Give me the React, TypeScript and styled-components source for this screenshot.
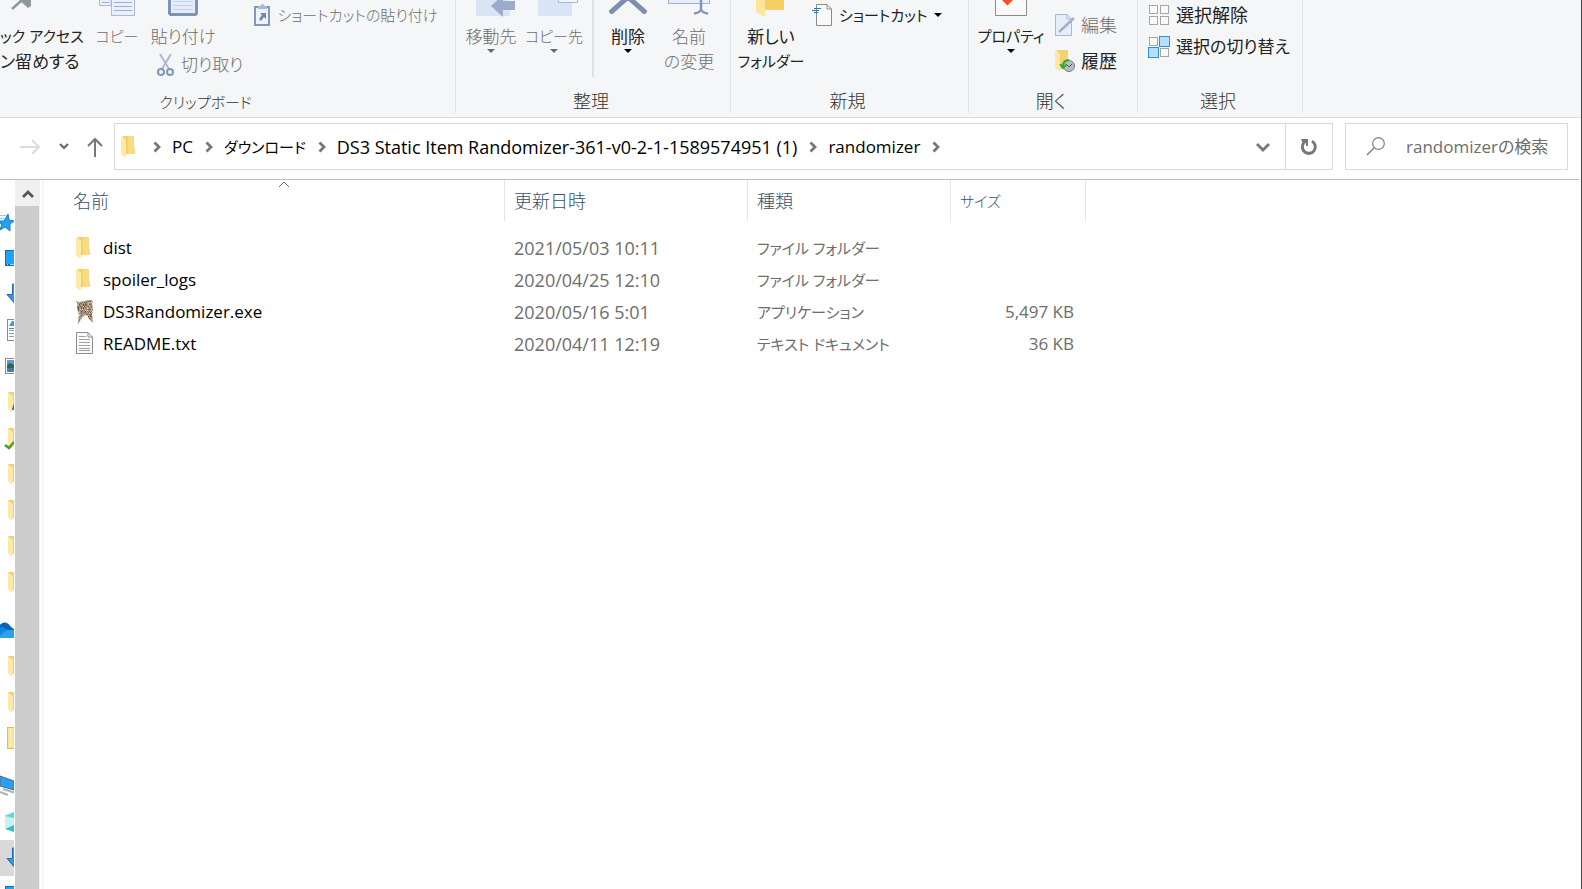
import React from "react";
import styled, { createGlobalStyle } from "styled-components";

const GlobalStyle = createGlobalStyle`
  *, *::before, *::after { box-sizing: border-box; }
  html, body { margin: 0; padding: 0; }
  body {
    background: #fff;
    color: #1a1a1a;
    font-family: "Open Sans", "Noto Sans CJK JP", sans-serif;
    font-size: 17px;
    font-feature-settings: "palt";
  }
  button, input { font: inherit; font-feature-settings: inherit; color: inherit; }
  button { background: none; border: 0; padding: 0; margin: 0; white-space: nowrap; }
`;

/* Katakana runs are set smaller than kanji, and kanji slightly larger than Latin. */
const Kana = styled.span`
  font-size: 15px;
`;

const Kanji = styled.span`
  font-size: 18px;
`;

const DateText = styled.time`
  font-size: 18px;
`;

const Window = styled.div`
  height: 100vh;
  display: flex;
  flex-direction: column;
  overflow: hidden;
  border-right: 1px solid #33484e;
`;

/* ---------- Ribbon ---------- */

const Ribbon = styled.header`
  display: flex;
  flex: none;
  height: 118px;
  padding-bottom: 4px;
  background: #f5f6f7;
  border-bottom: 1px solid #dadbdc;
`;

const Group = styled.section<{ $width: number }>`
  flex: none;
  width: ${(p) => p.$width}px;
  display: flex;
  flex-direction: column;
  border-right: 1px solid #e2e3e4;
`;

const GroupBody = styled.div<{ $padLeft: number }>`
  flex: 1;
  display: flex;
  align-items: flex-start;
  padding-left: ${(p) => p.$padLeft}px;
`;

const GroupTitle = styled.h2<{ $padRight?: number }>`
  margin: 0;
  padding-right: ${(p) => p.$padRight ?? 4}px;
  height: 24px;
  line-height: 24px;
  font-size: 18px;
  font-weight: 300;
  text-align: center;
  color: #333;
`;

const BigButton = styled.button<{ $width: number; $dim?: boolean; $edge?: boolean }>`
  width: ${(p) => p.$width}px;
  display: flex;
  flex-direction: column;
  align-items: ${(p) => (p.$edge ? "flex-start" : "center")};
  line-height: 25px;
  font-weight: ${(p) => (p.$dim ? 300 : 400)};
  color: ${(p) => (p.$dim ? "#6d6d6d" : "#222")};
  svg { display: block; flex: none; }
`;

const IconSlot = styled.span`
  display: flex;
  height: 24px;
`;

const Caret = styled.span<{ $dim?: boolean }>`
  border: 4px solid transparent;
  border-bottom: 0;
  border-top-color: ${(p) => (p.$dim ? "#6a6a6a" : "#000")};
`;

const SmallButton = styled.button<{ $dim?: boolean }>`
  height: 30px;
  display: flex;
  align-items: center;
  gap: 6px;
  line-height: 24px;
  font-weight: ${(p) => (p.$dim ? 300 : 400)};
  color: ${(p) => (p.$dim ? "#6d6d6d" : "#222")};
  svg { display: block; flex: none; }
`;

const Stack = styled.div<{ $gap?: number; $top?: number; $left?: number }>`
  display: flex;
  flex-direction: column;
  align-items: flex-start;
  gap: ${(p) => p.$gap ?? 0}px;
  padding-top: ${(p) => p.$top ?? 0}px;
  margin-left: ${(p) => p.$left ?? 0}px;
`;

const Divider = styled.span`
  width: 2px;
  height: 77px;
  margin: 0 6px;
  background: #dfe0e2;
`;

/* ---------- Address bar ---------- */

const AddressRow = styled.div`
  flex: none;
  display: flex;
  align-items: center;
  height: 62px;
  padding: 0 11px 4px 20px;
  margin-right: 2px;
  border-bottom: 1px solid #bcbcbc;
`;

const NavButtons = styled.div`
  display: flex;
  align-items: center;
  gap: 18px;
  width: 94px;
  svg { display: block; }
`;

const AddressBox = styled.nav`
  flex: 1;
  min-width: 0;
  height: 47px;
  display: flex;
  align-items: center;
  padding-left: 6px;
  border: 1px solid #d9d9d9;
  svg { display: block; flex: none; }
`;

const Crumbs = styled.ol`
  flex: 1;
  display: flex;
  align-items: center;
  margin: 0;
  padding: 0 0 0 18px;
  list-style: none;
  gap: 11px;
  color: #000;
  li { display: flex; align-items: center; gap: 12px; }
`;

const CrumbButton = styled.button<{ $size: number }>`
  font-size: ${(p) => p.$size}px;
  line-height: 24px;
`;

const HistoryButton = styled.button`
  width: 29px;
  height: 45px;
  display: flex;
  align-items: center;
`;

const RefreshButton = styled.button`
  width: 47px;
  height: 45px;
  display: flex;
  align-items: center;
  justify-content: center;
  border-left: 1px solid #d9d9d9;
`;

const SearchBox = styled.label`
  width: 223px;
  height: 47px;
  margin-left: 12px;
  padding-left: 20px;
  display: flex;
  align-items: center;
  gap: 20px;
  border: 1px solid #d9d9d9;
  svg { flex: none; }
`;

const SearchInput = styled.input`
  flex: 1;
  min-width: 0;
  padding: 0;
  border: 0;
  outline: 0;
  background: none;
  &::placeholder { color: #6d6d6d; opacity: 1; }
`;

/* ---------- Main area ---------- */

const Main = styled.div`
  flex: 1;
  min-height: 0;
  display: flex;
`;

const Tree = styled.aside`
  width: 14px;
  padding-top: 24px;
  overflow: hidden;
`;

const TreeItem = styled.div<{ $selected?: boolean; $gapBefore?: boolean }>`
  height: 36px;
  margin-top: ${(p) => (p.$gapBefore ? 12 : 0)}px;
  background: ${(p) => (p.$selected ? "#d9d9d9" : "transparent")};
  svg { display: block; }
`;

const ScrollBar = styled.div`
  flex: none;
  width: 25px;
  margin-left: 1px;
  display: flex;
  flex-direction: column;
  background: #f0f0f0;
`;

const ScrollUp = styled.button`
  height: 26px;
  display: flex;
  align-items: center;
  justify-content: center;
`;

const ScrollThumb = styled.div`
  flex: 1;
  margin-right: 1px;
  background: #cdcdcd;
`;

const FilePane = styled.main`
  flex: 1;
  min-width: 0;
  margin-left: 2px;
  padding-left: 18px;
  border-left: 2px solid #f6f6f6;
`;

const FileTable = styled.table`
  table-layout: fixed;
  width: 1024px;
  border-collapse: collapse;
`;

const HeadCell = styled.th<{ $width: number }>`
  width: ${(p) => p.$width}px;
  padding: 0 0 11px;
  position: relative;
  text-align: left;
  font-weight: 300;
`;

const HeadLabel = styled.div<{ $pad: number }>`
  height: 41px;
  line-height: 42px;
  padding-left: ${(p) => p.$pad}px;
  border-right: 1px solid #e5e5e5;
  color: #3a4f6c;
`;

const SortMark = styled.svg`
  position: absolute;
  top: 1px;
  left: 50%;
  margin-left: -6px;
`;

const Cell = styled.td<{ $right?: boolean }>`
  height: 32px;
  padding: 0 ${(p) => (p.$right ? 12 : 0)}px 0 9px;
  line-height: 24px;
  white-space: nowrap;
  text-align: ${(p) => (p.$right ? "right" : "left")};
  color: #6d6d6d;
`;

const FileName = styled.span`
  display: flex;
  align-items: center;
  gap: 10px;
  padding-left: 5px;
  color: #000;
`;

/* ---------- Drawings ---------- */

const Folder = () => (
  <svg width="14" height="22" viewBox="0 0 14 22" aria-hidden="true">
    <path d="M2 0H13V12L14 13V18H4Z" fill="#f3d06f" />
    <path d="M7 0H13V12L14 13V18H7Z" fill="#f9dc80" />
    <path d="M0 0L5 4V21L3 21L0 18Z" fill="#ffe9a6" />
  </svg>
);

const TextFile = () => (
  <svg width="17" height="24" viewBox="0 0 17 24" aria-hidden="true">
    <path d="M.5.5H12L16.500 5V21.500H.5Z" fill="#fafafa" stroke="#8b8b8b" />
    <path d="M12 .5V5H16.500" fill="none" stroke="#8b8b8b" />
    <path d="M3 4.500H10M3 7.500H14M3 10.500H14M3 13.500H14M3 16.500H14M3 18.500H14" stroke="#a0a0a0" />
  </svg>
);

const speckColors = ["#7d6a56", "#c9b9a0", "#8a7763", "#d8ccb8", "#b59a7c", "#5e5042"];

const Banner = () => (
  <svg width="17" height="24" viewBox="0 0 17 24" aria-hidden="true">
    <clipPath id="banner">
      <path d="M0 1L3 2L9 1L15 0L17 1L16 3L17 8L16 14L17 23L13 19L12 16L9 15L6 18L2 24L3 15L1 8L1 3Z" />
    </clipPath>
    <g clipPath="url(#banner)">
      <rect width="17" height="24" fill="#a59480" />
      {Array.from({ length: 408 }, (_, i) => {
        const k = (i * 37 + ((i * i) % 23) * 11 + ((i * i * i) % 19) * 5) % 11;
        return k < 6 ? (
          <rect key={i} x={i % 17} y={Math.floor(i / 17)} width="1" height="1" fill={speckColors[k]} />
        ) : null;
      })}
      <path d="M5 7Q9 3 12 7M7 14L9 12L11 15" fill="none" stroke="#b0643c" />
    </g>
  </svg>
);

const Crumb = () => (
  <svg width="8" height="12" viewBox="0 0 8 12" aria-hidden="true">
    <path d="M1.500 1.500L6 6L1.500 10.500" fill="none" stroke="#777" strokeWidth="2.800" />
  </svg>
);

const TreeIcon = ({ children }: { children: React.ReactNode }) => (
  <svg width="14" height="36" viewBox="0 0 14 36" aria-hidden="true">{children}</svg>
);

const treeFolder = (
  <>
    <path d="M8 8H14V26H10Z" fill="#efcf6e" />
    <path d="M8 8L13 12V26L12 29L8 25Z" fill="#ffe8a4" />
  </>
);

const treeDesktop = (
  <>
    <rect x="5" y="10" width="20" height="16" fill="#0a6fc0" />
    <rect x="6" y="11" width="20" height="13" fill="#1ea2fb" />
    <path d="M7 24.500H8M10 24.500H14" stroke="#9fd6ff" />
  </>
);

const treeDownload = (
  <path d="M12.500 8H20V19H26L16 29L7 18.500H12.500Z" fill="#3393e6" stroke="#1c6fbd" />
);

type TreeEntry = { id: string; art: React.ReactNode; gap?: boolean; selected?: boolean };

const tree: TreeEntry[] = [
  {
    id: "quick",
    art: (
      <>
        <path d="M8 10L9 16L14 17L10 20L10 27L5 23L0 26L2 20L-4 17H4Z" fill="#29a0ec" stroke="#1380cc" />
        <path d="M0 11.500H6M0 14.500H4" stroke="#8fcdf5" />
      </>
    ),
  },
  { id: "desktop", art: treeDesktop },
  { id: "downloads", art: treeDownload },
  {
    id: "documents",
    art: (
      <>
        <rect x="7.500" y="7.500" width="18" height="21" fill="#fff" stroke="#8b8b8b" />
        <path d="M9 14L12 9H14V14Z" fill="#3c9ddd" />
        <path d="M9 16.500H14" stroke="#2c8ed6" />
        <path d="M9 18.500H14M9 21.500H14M9 24.500H14" stroke="#9a9a9a" />
      </>
    ),
  },
  {
    id: "pictures",
    art: (
      <>
        <rect x="5.500" y="10.500" width="20" height="15" fill="#fff" stroke="#8b8b8b" />
        <rect x="7" y="12" width="7" height="12" fill="#5b9be0" />
        <path d="M7 17L10 15L14 17V20H7Z" fill="#2f6550" />
        <path d="M7 20H14V24H7Z" fill="#3f7fb0" />
      </>
    ),
  },
  { id: "f1", art: <>{treeFolder}<path d="M12 25L14 19V26H12Z" fill="#1f7ac0" /></> },
  { id: "f2", art: <>{treeFolder}<path d="M5 25L9 28L14 22" fill="none" stroke="#45a01c" strokeWidth="2.400" /></> },
  { id: "f3", art: treeFolder },
  { id: "f4", art: treeFolder },
  { id: "f5", art: treeFolder },
  { id: "f6", art: treeFolder },
  {
    id: "onedrive",
    gap: true,
    art: (
      <>
        <path d="M-3 22Q-3 14 1 12Q6 8 11 15L14 17V24H-3Z" fill="#0a62b8" />
        <path d="M-3 16L2 15L9 18L-3 26Z" fill="#1387d8" />
        <path d="M-2 26Q6 16 14 18V26Z" fill="#28a5ea" />
      </>
    ),
  },
  { id: "f7", art: treeFolder },
  { id: "f8", art: treeFolder },
  {
    id: "library",
    art: (
      <>
        <rect x="7.500" y="7.500" width="14" height="21" fill="#ffe390" stroke="#e3bd45" />
        <path d="M10.500 9V27" stroke="#fff3c8" />
      </>
    ),
  },
  {
    id: "pc",
    gap: true,
    art: (
      <>
        <path d="M0 8L14 13V22L0 18Z" fill="#2aa0f5" stroke="#4e6b80" />
        <path d="M3 21L14 24.500M0 24L8 27" stroke="#a7b2bb" strokeWidth="2" />
      </>
    ),
  },
  {
    id: "objects3d",
    art: (
      <>
        <path d="M5 11L14 8V28L5 24Z" fill="#c9f1f1" />
        <path d="M5 12L14 8V14Z" fill="#5dd6da" />
        <path d="M5 25L14 21V28Z" fill="#2cc3ca" />
      </>
    ),
  },
  { id: "pcdownloads", selected: true, art: treeDownload },
  { id: "pcdesktop", art: treeDesktop },
];

const Grid4 = ({ active }: { active?: boolean }) => (
  <svg width="22" height="22" viewBox="0 0 22 22" aria-hidden="true">
    {[[1.5, 1.5], [12.5, 1.5], [1.5, 12.5], [12.5, 12.5]].map(([x, y], i) => {
      const on = active && (i === 1 || i === 2);
      return (
        <rect key={i} x={on ? x - 1 : x} y={on ? y - 1 : y} width={on ? 10 : 8} height={on ? 10 : 8}
          fill={on ? "#b5dffb" : "#f9f9f9"} stroke={on ? "#2b93dc" : "#a6a6a6"} />
      );
    })}
  </svg>
);

type FileEntry = { icon: React.ReactNode; name: string; date: string; type: string; size: string };

const files: FileEntry[] = [
  { icon: <Folder />, name: "dist", date: "2021/05/03 10:11", type: "ファイル フォルダー", size: "" },
  { icon: <Folder />, name: "spoiler_logs", date: "2020/04/25 12:10", type: "ファイル フォルダー", size: "" },
  { icon: <Banner />, name: "DS3Randomizer.exe", date: "2020/05/16 5:01", type: "アプリケーション", size: "5,497 KB" },
  { icon: <TextFile />, name: "README.txt", date: "2020/04/11 12:19", type: "テキスト ドキュメント", size: "36 KB" },
];

const FileIcon = styled.span`
  width: 17px;
  display: flex;
  svg { display: block; }
`;

const path = [
  { label: "PC", size: 17 },
  { label: "ダウンロード", size: 15 },
  { label: "DS3 Static Item Randomizer-361-v0-2-1-1589574951 (1)", size: 18 },
  { label: "randomizer", size: 17 },
];

export default function App() {
  return (
    <Window>
      <GlobalStyle />
      <Ribbon>
        <Group $width={456}>
          <GroupBody $padLeft={0}>
            <BigButton $width={88} $edge>
              <IconSlot>
                <svg width="32" height="16" viewBox="-11 0 32 16" aria-hidden="true">
                  <path d="M1 9L11 0" stroke="#8d979c" strokeWidth="2.400" />
                  <path d="M8 0L17 8L20 6L20 0Z" fill="#8d979c" />
                </svg>
              </IconSlot>
              <Kana>ック アクセス</Kana>
              <span>ン留めする</span>
            </BigButton>
            <BigButton $width={58} $dim>
              <IconSlot>
                <svg width="36" height="16" viewBox="0 0 36 16" aria-hidden="true">
                  <path d="M.5 0V5.500H12V0" fill="#eaf0fa" stroke="#a9b9d6" />
                  <path d="M12.500 0V15.500H35.500V0" fill="#eaf0fa" stroke="#a9b9d6" />
                  <path d="M3 2.500H10M15 2.500H33M15 6.500H33M15 10.500H33" stroke="#9db0d0" />
                </svg>
              </IconSlot>
              <Kana>コピー</Kana>
            </BigButton>
            <Stack $left={4}>
              <BigButton $width={66} $dim>
                <IconSlot>
                  <svg width="30" height="16" viewBox="0 0 30 16" aria-hidden="true">
                    <path d="M0 0H30V14L28 16H2L0 14Z" fill="#7f93b6" />
                    <path d="M3 0H27V13H3Z" fill="#e6edf8" />
                    <path d="M5 1.500H25M5 5.500H25M5 9.500H25" stroke="#c5d2e8" />
                  </svg>
                </IconSlot>
                <span>貼り付け</span>
              </BigButton>
              <Stack $left={7} $top={1}>
                <SmallButton $dim>
                  <svg width="18" height="23" viewBox="0 0 18 23" aria-hidden="true">
                    <path d="M3 0L12 15M14 0L5 15" stroke="#a9bad4" strokeWidth="2" />
                    <circle cx="4" cy="18" r="3" fill="none" stroke="#8296ba" strokeWidth="2" />
                    <circle cx="13" cy="18" r="3" fill="none" stroke="#8296ba" strokeWidth="2" />
                  </svg>
                  切り取り
                </SmallButton>
              </Stack>
            </Stack>
            <Stack $left={10}>
              <SmallButton $dim>
                <svg width="18" height="22" viewBox="0 0 18 22" aria-hidden="true">
                  <rect x="2" y="3" width="14" height="18" fill="#eef3fb" stroke="#8397ba" strokeWidth="2" />
                  <path d="M5 2H7L9 0H10L12 2H14V5H5Z" fill="#a9bad6" />
                  <path d="M7 9H13V15L11 13L8 17L6 15L9 11Z" fill="#6f86b0" />
                </svg>
                <Kana>ショートカットの貼り付け</Kana>
              </SmallButton>
            </Stack>
          </GroupBody>
          <GroupTitle $padRight={44}><Kana>クリップボード</Kana></GroupTitle>
        </Group>

        <Group $width={275}>
          <GroupBody $padLeft={4}>
            <BigButton $width={62} $dim>
              <IconSlot>
                <svg width="50" height="18" viewBox="-10 0 50 18" aria-hidden="true">
                  <path d="M0 0H34V16H0Z" fill="#dae4f4" />
                  <path d="M15 6L27 -5V1H39V10H27V17Z" fill="#9aacca" />
                </svg>
              </IconSlot>
              <span>移動先</span>
              <Caret $dim />
            </BigButton>
            <BigButton $width={64} $dim>
              <IconSlot>
                <svg width="50" height="16" viewBox="-9 0 50 16" aria-hidden="true">
                  <path d="M0 0H34V16H0Z" fill="#dae4f4" />
                  <path d="M20.500 -1V2.500H39.500V-1" fill="#f2f6fc" stroke="#a9b9d6" />
                </svg>
              </IconSlot>
              <Kana>コピー先</Kana>
              <Caret $dim />
            </BigButton>
            <Divider />
            <BigButton $width={56}>
              <IconSlot>
                <svg width="38" height="14" viewBox="0 0 38 14" aria-hidden="true">
                  <path d="M1 13L19 -3L37 13" fill="none" stroke="#7d8fb0" strokeWidth="5" />
                </svg>
              </IconSlot>
              <span>削除</span>
              <Caret />
            </BigButton>
            <BigButton $width={66} $dim>
              <IconSlot>
                <svg width="42" height="15" viewBox="0 0 42 15" aria-hidden="true">
                  <path d="M.5 0V3.500H41.500V0" fill="#e8effa" stroke="#9fb1d0" />
                  <path d="M33 0V9M26 13.500Q32 13 33 9Q34 13 40 13.500" fill="none" stroke="#8296b8" strokeWidth="2.400" />
                </svg>
              </IconSlot>
              <span>名前</span>
              <span>の変更</span>
            </BigButton>
          </GroupBody>
          <GroupTitle>整理</GroupTitle>
        </Group>

        <Group $width={238}>
          <GroupBody $padLeft={4}>
            <BigButton $width={72}>
              <IconSlot>
                <svg width="30" height="16" viewBox="0 0 30 16" aria-hidden="true">
                  <path d="M4 0H28V10H8L4 14Z" fill="#f5cf62" />
                  <path d="M0 0H9V16L7 16L0 12Z" fill="#ffe59a" />
                </svg>
              </IconSlot>
              <span>新しい</span>
              <Kana>フォルダー</Kana>
            </BigButton>
            <Stack $left={5}>
              <SmallButton>
                <svg width="21" height="22" viewBox="0 0 21 22" aria-hidden="true">
                  <path d="M4.500 .5H15L19.500 5V21.500H4.500Z" fill="#fafafa" stroke="#8a8a8a" />
                  <path d="M15 .5V5H19.500" fill="none" stroke="#8a8a8a" />
                  <path d="M2 4.500H9M0 6.500H7M2 8.500H6" stroke="#1d78c4" />
                </svg>
                <Kana>ショートカット</Kana>
                <Caret />
              </SmallButton>
            </Stack>
          </GroupBody>
          <GroupTitle>新規</GroupTitle>
        </Group>

        <Group $width={169}>
          <GroupBody $padLeft={4}>
            <BigButton $width={76}>
              <IconSlot>
                <svg width="32" height="16" viewBox="0 0 32 16" aria-hidden="true">
                  <path d="M.5 0V15.500H31.500V0" fill="#fafafa" stroke="#8a8a8a" />
                  <path d="M7 0L12.500 5.500L18 0Z" fill="#f4511e" />
                </svg>
              </IconSlot>
              <Kana>プロパティ</Kana>
              <Caret />
            </BigButton>
            <Stack $gap={6} $top={10} $left={6}>
              <SmallButton $dim>
                <svg width="20" height="22" viewBox="0 0 20 22" aria-hidden="true">
                  <path d="M.5 .5H12L16.500 5V21.500H.5Z" fill="#e6eefa" stroke="#a7b9d8" />
                  <path d="M12 .5V5H16.500" fill="none" stroke="#a7b9d8" />
                  <path d="M4 18L19 4" stroke="#9fb0ce" strokeWidth="2.400" />
                </svg>
                <Kanji>編集</Kanji>
              </SmallButton>
              <SmallButton>
                <svg width="20" height="23" viewBox="0 0 20 23" aria-hidden="true">
                  <path d="M2 0H13V19H4Z" fill="#f5d271" />
                  <path d="M0 0L5 4V22L0 18Z" fill="#ffe9a6" />
                  <circle cx="14" cy="16" r="5.500" fill="#b9bdbd" stroke="#7b8080" />
                  <path d="M11 14L14 17L17 14" fill="none" stroke="#555" />
                  <path d="M14 10Q8 10 8 16M5 14L8 18L11 15" fill="none" stroke="#2fae2f" strokeWidth="2" />
                </svg>
                <Kanji>履歴</Kanji>
              </SmallButton>
            </Stack>
          </GroupBody>
          <GroupTitle>開く</GroupTitle>
        </Group>

        <Group $width={165}>
          <GroupBody $padLeft={10}>
            <Stack $gap={2}>
              <SmallButton><Grid4 /><Kanji>選択解除</Kanji></SmallButton>
              <SmallButton><Grid4 active />選択の切り替え</SmallButton>
            </Stack>
          </GroupBody>
          <GroupTitle>選択</GroupTitle>
        </Group>
      </Ribbon>

      <AddressRow>
        <NavButtons>
          <button aria-label="進む">
            <svg width="21" height="16" viewBox="0 0 21 16" aria-hidden="true">
              <path d="M0 8H19M12 1L19 8L12 15" fill="none" stroke="#dcdcdc" strokeWidth="2" />
            </svg>
          </button>
          <button aria-label="最近表示した場所">
            <svg width="10" height="7" viewBox="0 0 10 7" aria-hidden="true">
              <path d="M1 1L5 5L9 1" fill="none" stroke="#666" strokeWidth="2.200" />
            </svg>
          </button>
          <button aria-label="上へ">
            <svg width="16" height="20" viewBox="0 0 16 20" aria-hidden="true">
              <path d="M8 20V2M1 9L8 2L15 9" fill="none" stroke="#777" strokeWidth="2" />
            </svg>
          </button>
        </NavButtons>
        <AddressBox aria-label="アドレス">
          <Folder />
          <Crumbs>
            <Crumb />
            {path.map((part) => (
              <li key={part.label}>
                <CrumbButton $size={part.size}>{part.label}</CrumbButton>
                <Crumb />
              </li>
            ))}
          </Crumbs>
          <HistoryButton aria-label="以前の場所">
            <svg width="14" height="10" viewBox="0 0 14 10" aria-hidden="true">
              <path d="M1 2L7 8L13 2" fill="none" stroke="#777" strokeWidth="2.800" />
            </svg>
          </HistoryButton>
          <RefreshButton aria-label="最新の情報に更新">
            <svg width="18" height="18" viewBox="0 0 18 18" aria-hidden="true">
              <path d="M12 3.200A6.500 6.500 0 1 1 4 4.500" fill="none" stroke="#777" strokeWidth="3" />
              <path d="M1 1H8V8H6V5L3 6Z" fill="#777" />
            </svg>
          </RefreshButton>
        </AddressBox>
        <SearchBox>
          <svg width="20" height="19" viewBox="0 0 20 19" aria-hidden="true">
            <circle cx="12.500" cy="6.500" r="5.800" fill="none" stroke="#808080" strokeWidth="1.200" />
            <path d="M8.500 10.500L1 18" stroke="#808080" strokeWidth="1.400" />
          </svg>
          <SearchInput type="text" aria-label="randomizerの検索" placeholder="randomizerの検索" />
        </SearchBox>
      </AddressRow>

      <Main>
        <Tree aria-label="ナビゲーション">
          {tree.map((item) => (
            <TreeItem key={item.id} $gapBefore={item.gap} $selected={item.selected}>
              <TreeIcon>{item.art}</TreeIcon>
            </TreeItem>
          ))}
        </Tree>
        <ScrollBar>
          <ScrollUp aria-label="上へスクロール">
            <svg width="12" height="10" viewBox="0 0 12 10" aria-hidden="true">
              <path d="M1 9L6 4L11 9" fill="none" stroke="#555" strokeWidth="2.800" />
            </svg>
          </ScrollUp>
          <ScrollThumb />
        </ScrollBar>
        <FilePane>
          <FileTable>
            <thead>
              <tr>
                <HeadCell $width={443} scope="col" aria-sort="ascending">
                  <SortMark width="12" height="7" viewBox="0 0 12 7" aria-hidden="true">
                    <path d="M1 6L6 1L11 6" fill="none" stroke="#666" />
                  </SortMark>
                  <HeadLabel $pad={11}><Kanji>名前</Kanji></HeadLabel>
                </HeadCell>
                <HeadCell $width={243} scope="col"><HeadLabel $pad={9}><Kanji>更新日時</Kanji></HeadLabel></HeadCell>
                <HeadCell $width={203} scope="col"><HeadLabel $pad={9}><Kanji>種類</Kanji></HeadLabel></HeadCell>
                <HeadCell $width={135} scope="col"><HeadLabel $pad={9}><Kana>サイズ</Kana></HeadLabel></HeadCell>
              </tr>
            </thead>
            <tbody>
              {files.map((file) => (
                <tr key={file.name}>
                  <Cell>
                    <FileName><FileIcon>{file.icon}</FileIcon>{file.name}</FileName>
                  </Cell>
                  <Cell><DateText>{file.date}</DateText></Cell>
                  <Cell><Kana>{file.type}</Kana></Cell>
                  <Cell $right>{file.size}</Cell>
                </tr>
              ))}
            </tbody>
          </FileTable>
        </FilePane>
      </Main>
    </Window>
  );
}
